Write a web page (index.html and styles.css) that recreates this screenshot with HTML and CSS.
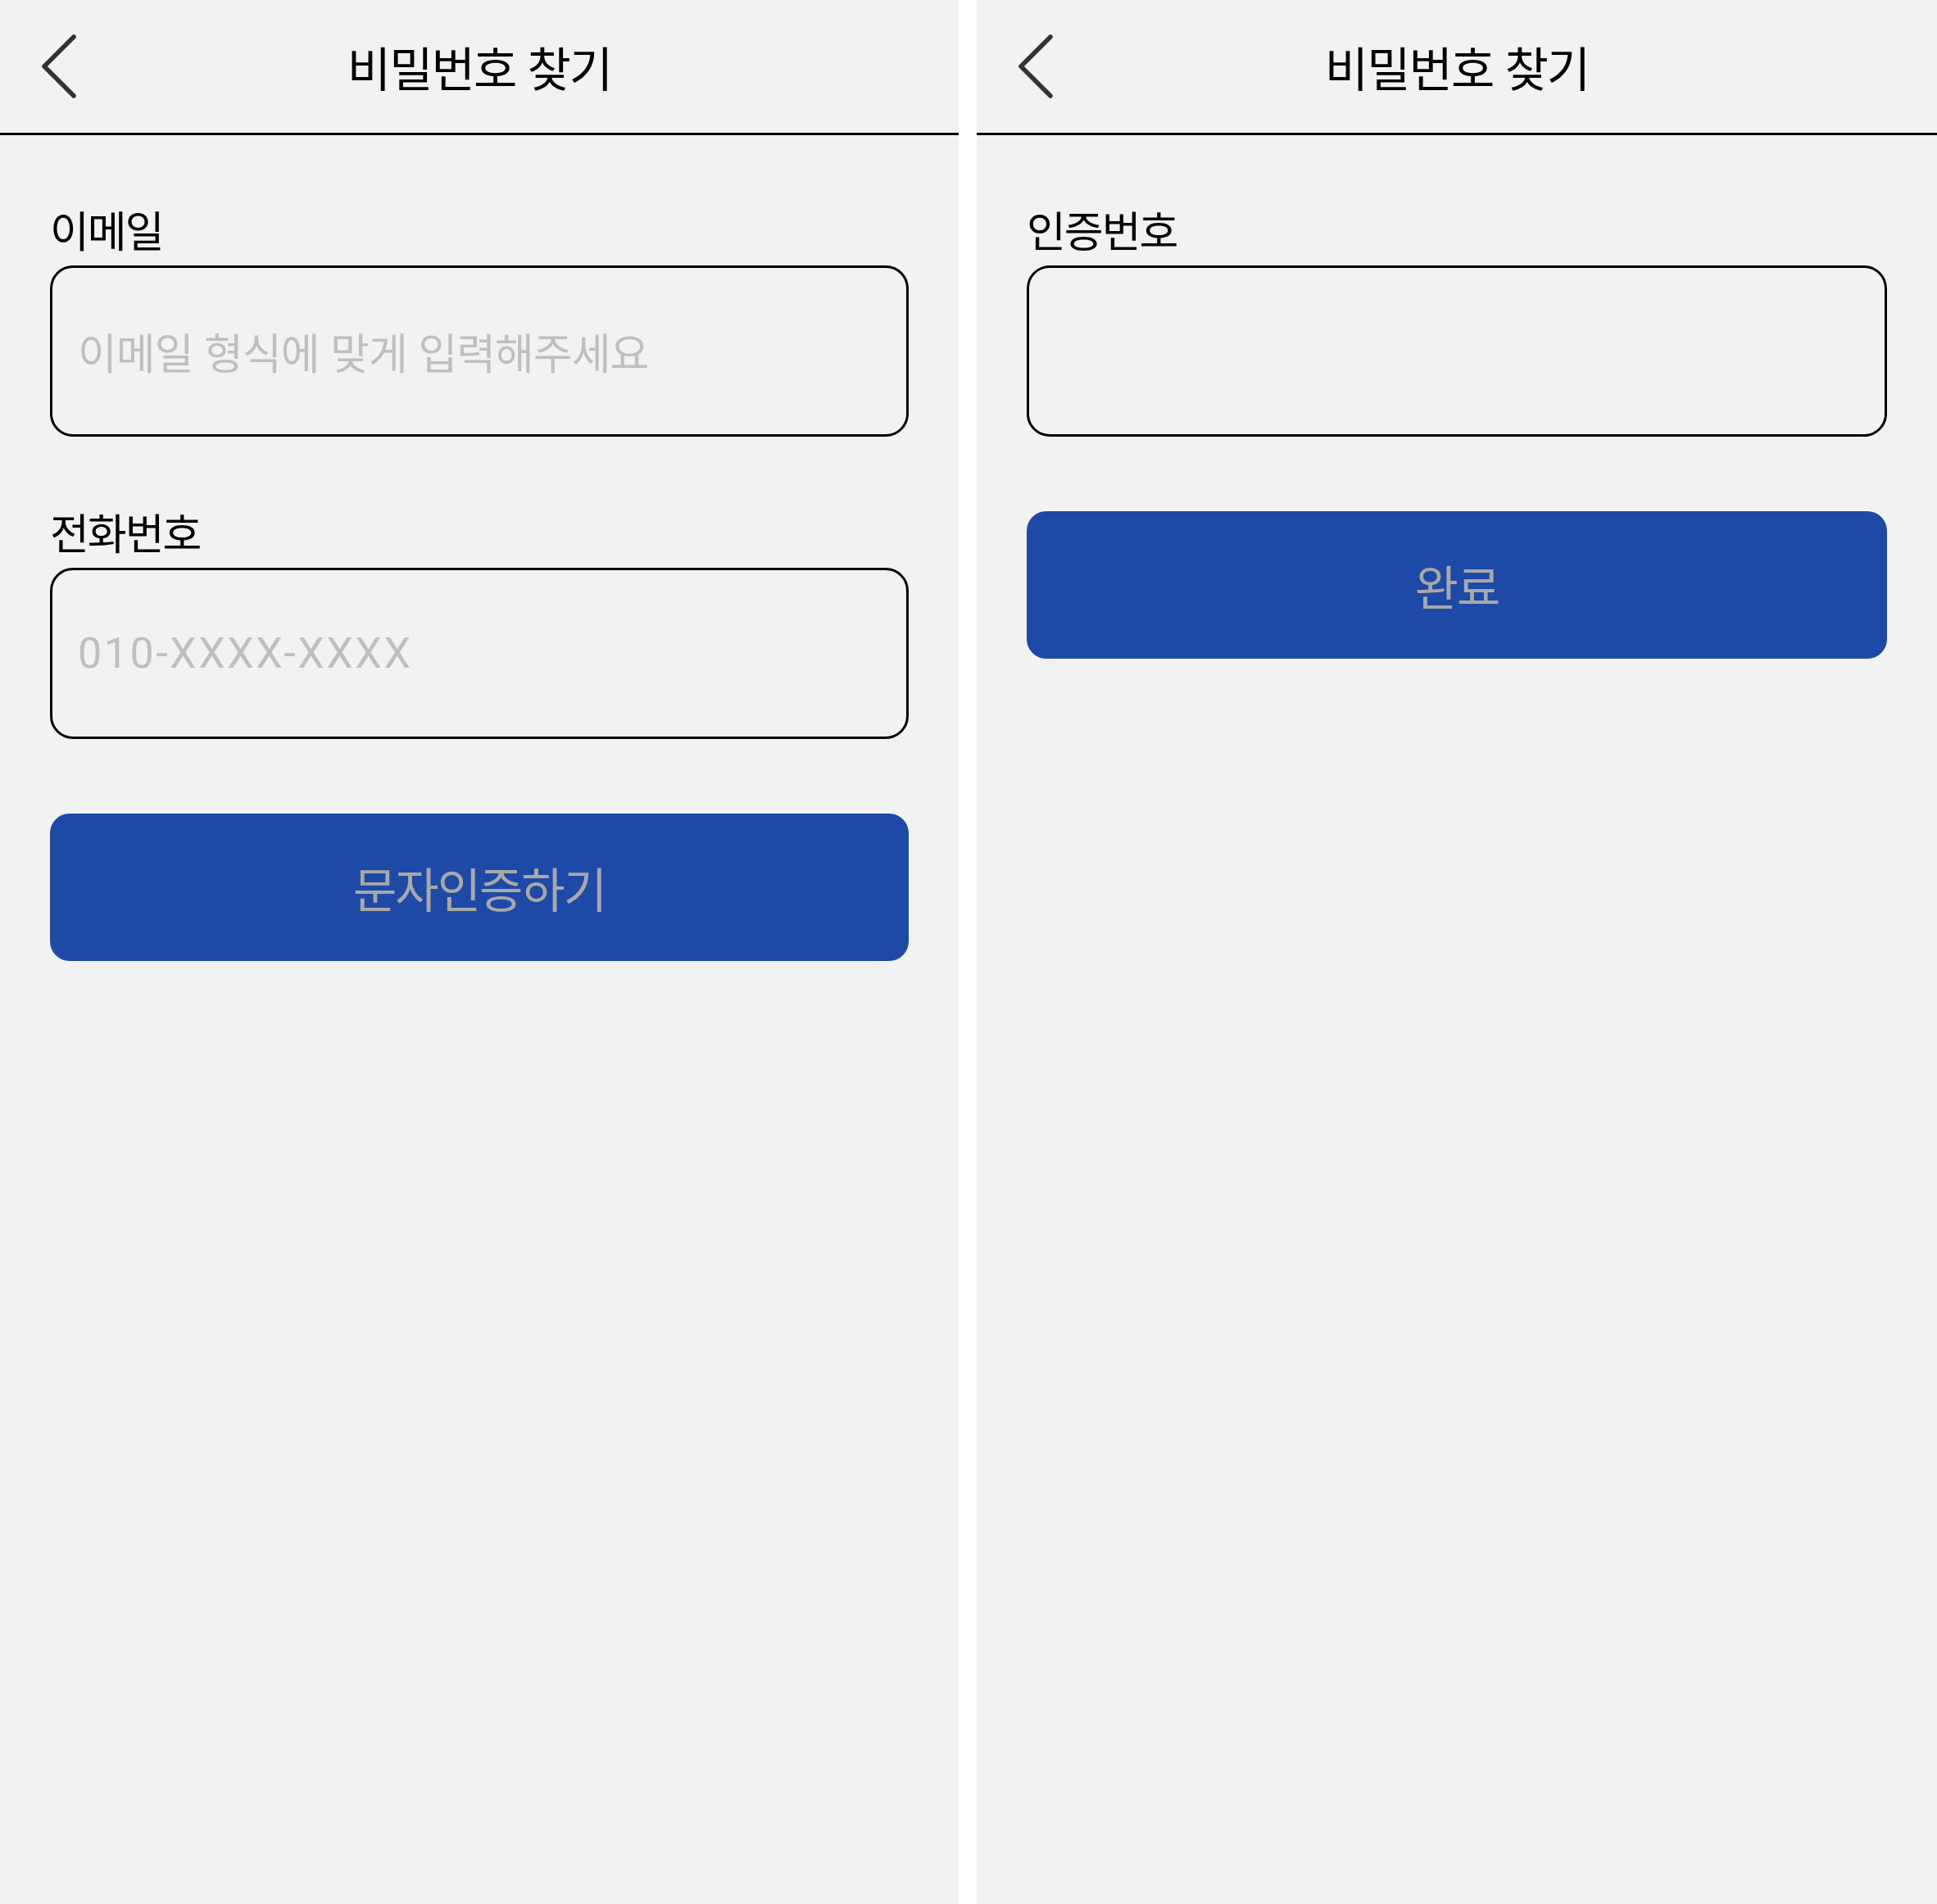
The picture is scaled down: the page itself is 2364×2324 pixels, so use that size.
FILE: index.html
```html
<!DOCTYPE html>
<html lang="ko">
<head>
<meta charset="utf-8">
<title>비밀번호 찾기</title>
<link rel="stylesheet" href="styles.css">
</head>
<body>
<div class="screens">
  <section class="screen screen-left">
    <header class="topbar">
      <button class="back" type="button" aria-label="뒤로">
        <svg width="48" height="82" viewBox="0 0 48 82"><path d="M42 5 L6 41 L42 77" fill="none" stroke="#333" stroke-width="5.5" stroke-linecap="round" stroke-linejoin="round"/></svg>
      </button>
      <h1 class="title">비밀번호 찾기</h1>
      <span class="spacer"></span>
    </header>
    <div class="content">
      <div class="field">
        <label class="label">이메일</label>
        <input class="input" type="text" placeholder="이메일 형식에 맞게 입력해주세요">
      </div>
      <div class="field">
        <label class="label">전화번호</label>
        <input class="input input-phone" type="text" placeholder="010-XXXX-XXXX">
      </div>
      <button class="primary" type="button">문자인증하기</button>
    </div>
  </section>
  <section class="screen screen-right">
    <header class="topbar">
      <button class="back" type="button" aria-label="뒤로">
        <svg width="48" height="82" viewBox="0 0 48 82"><path d="M42 5 L6 41 L42 77" fill="none" stroke="#333" stroke-width="5.5" stroke-linecap="round" stroke-linejoin="round"/></svg>
      </button>
      <h1 class="title">비밀번호 찾기</h1>
      <span class="spacer"></span>
    </header>
    <div class="content">
      <div class="field">
        <label class="label">인증번호</label>
        <input class="input" type="text">
      </div>
      <button class="primary" type="button">완료</button>
    </div>
  </section>
</div>
</body>
</html>
```

FILE: styles.css
```css
* { box-sizing: border-box; }
html, body {
  margin: 0;
  padding: 0;
  background: #ffffff;
}
body {
  font-family: "Noto Sans CJK KR", "Noto Sans", sans-serif;
  color: #000;
}
.screens {
  display: flex;
  gap: 22px;
  height: 2324px;
}
.screen {
  background: #f2f2f2;
  display: flex;
  flex-direction: column;
}
.screen-left {
  flex: 0 0 1170px;
}
.screen-right {
  flex: 1;
}
.topbar {
  height: 165px;
  border-bottom: 3px solid #000;
  display: grid;
  grid-template-columns: 1fr auto 1fr;
  align-items: center;
}
.back {
  justify-self: start;
  margin: 0 0 0 48px;
  padding: 0;
  border: 0;
  background: none;
  width: 48px;
  height: 82px;
  display: flex;
}
.title {
  margin: 0;
  font-size: 58px;
  font-weight: 400;
  line-height: 64px;
  letter-spacing: -2px;
}
.content {
  padding: 83px 61px 0;
  display: flex;
  flex-direction: column;
}
.field {
  display: flex;
  flex-direction: column;
  margin-bottom: 84px;
}
.label {
  font-size: 52px;
  line-height: 64px;
  height: 64px;
  margin-bottom: 12px;
  letter-spacing: -2px;
}
.input {
  height: 209px;
  border: 3px solid #000;
  border-radius: 28px;
  background: transparent;
  padding: 0 0 0 31px;
  font-family: inherit;
  font-size: 52px;
  color: #000;
  outline: none;
  letter-spacing: -1px;
}
.input::placeholder {
  color: #bfbfbf;
}
.input-phone {
  font-family: "Roboto", "Noto Sans CJK KR", sans-serif;
  letter-spacing: 2.5px;
  font-size: 52px;
}
.primary {
  margin-top: 7px;
  height: 180px;
  border: 0;
  border-radius: 24px;
  background: #1d4aa7;
  color: #a8a8a8;
  font-family: inherit;
  font-size: 58px;
  letter-spacing: -2px;
}
```
